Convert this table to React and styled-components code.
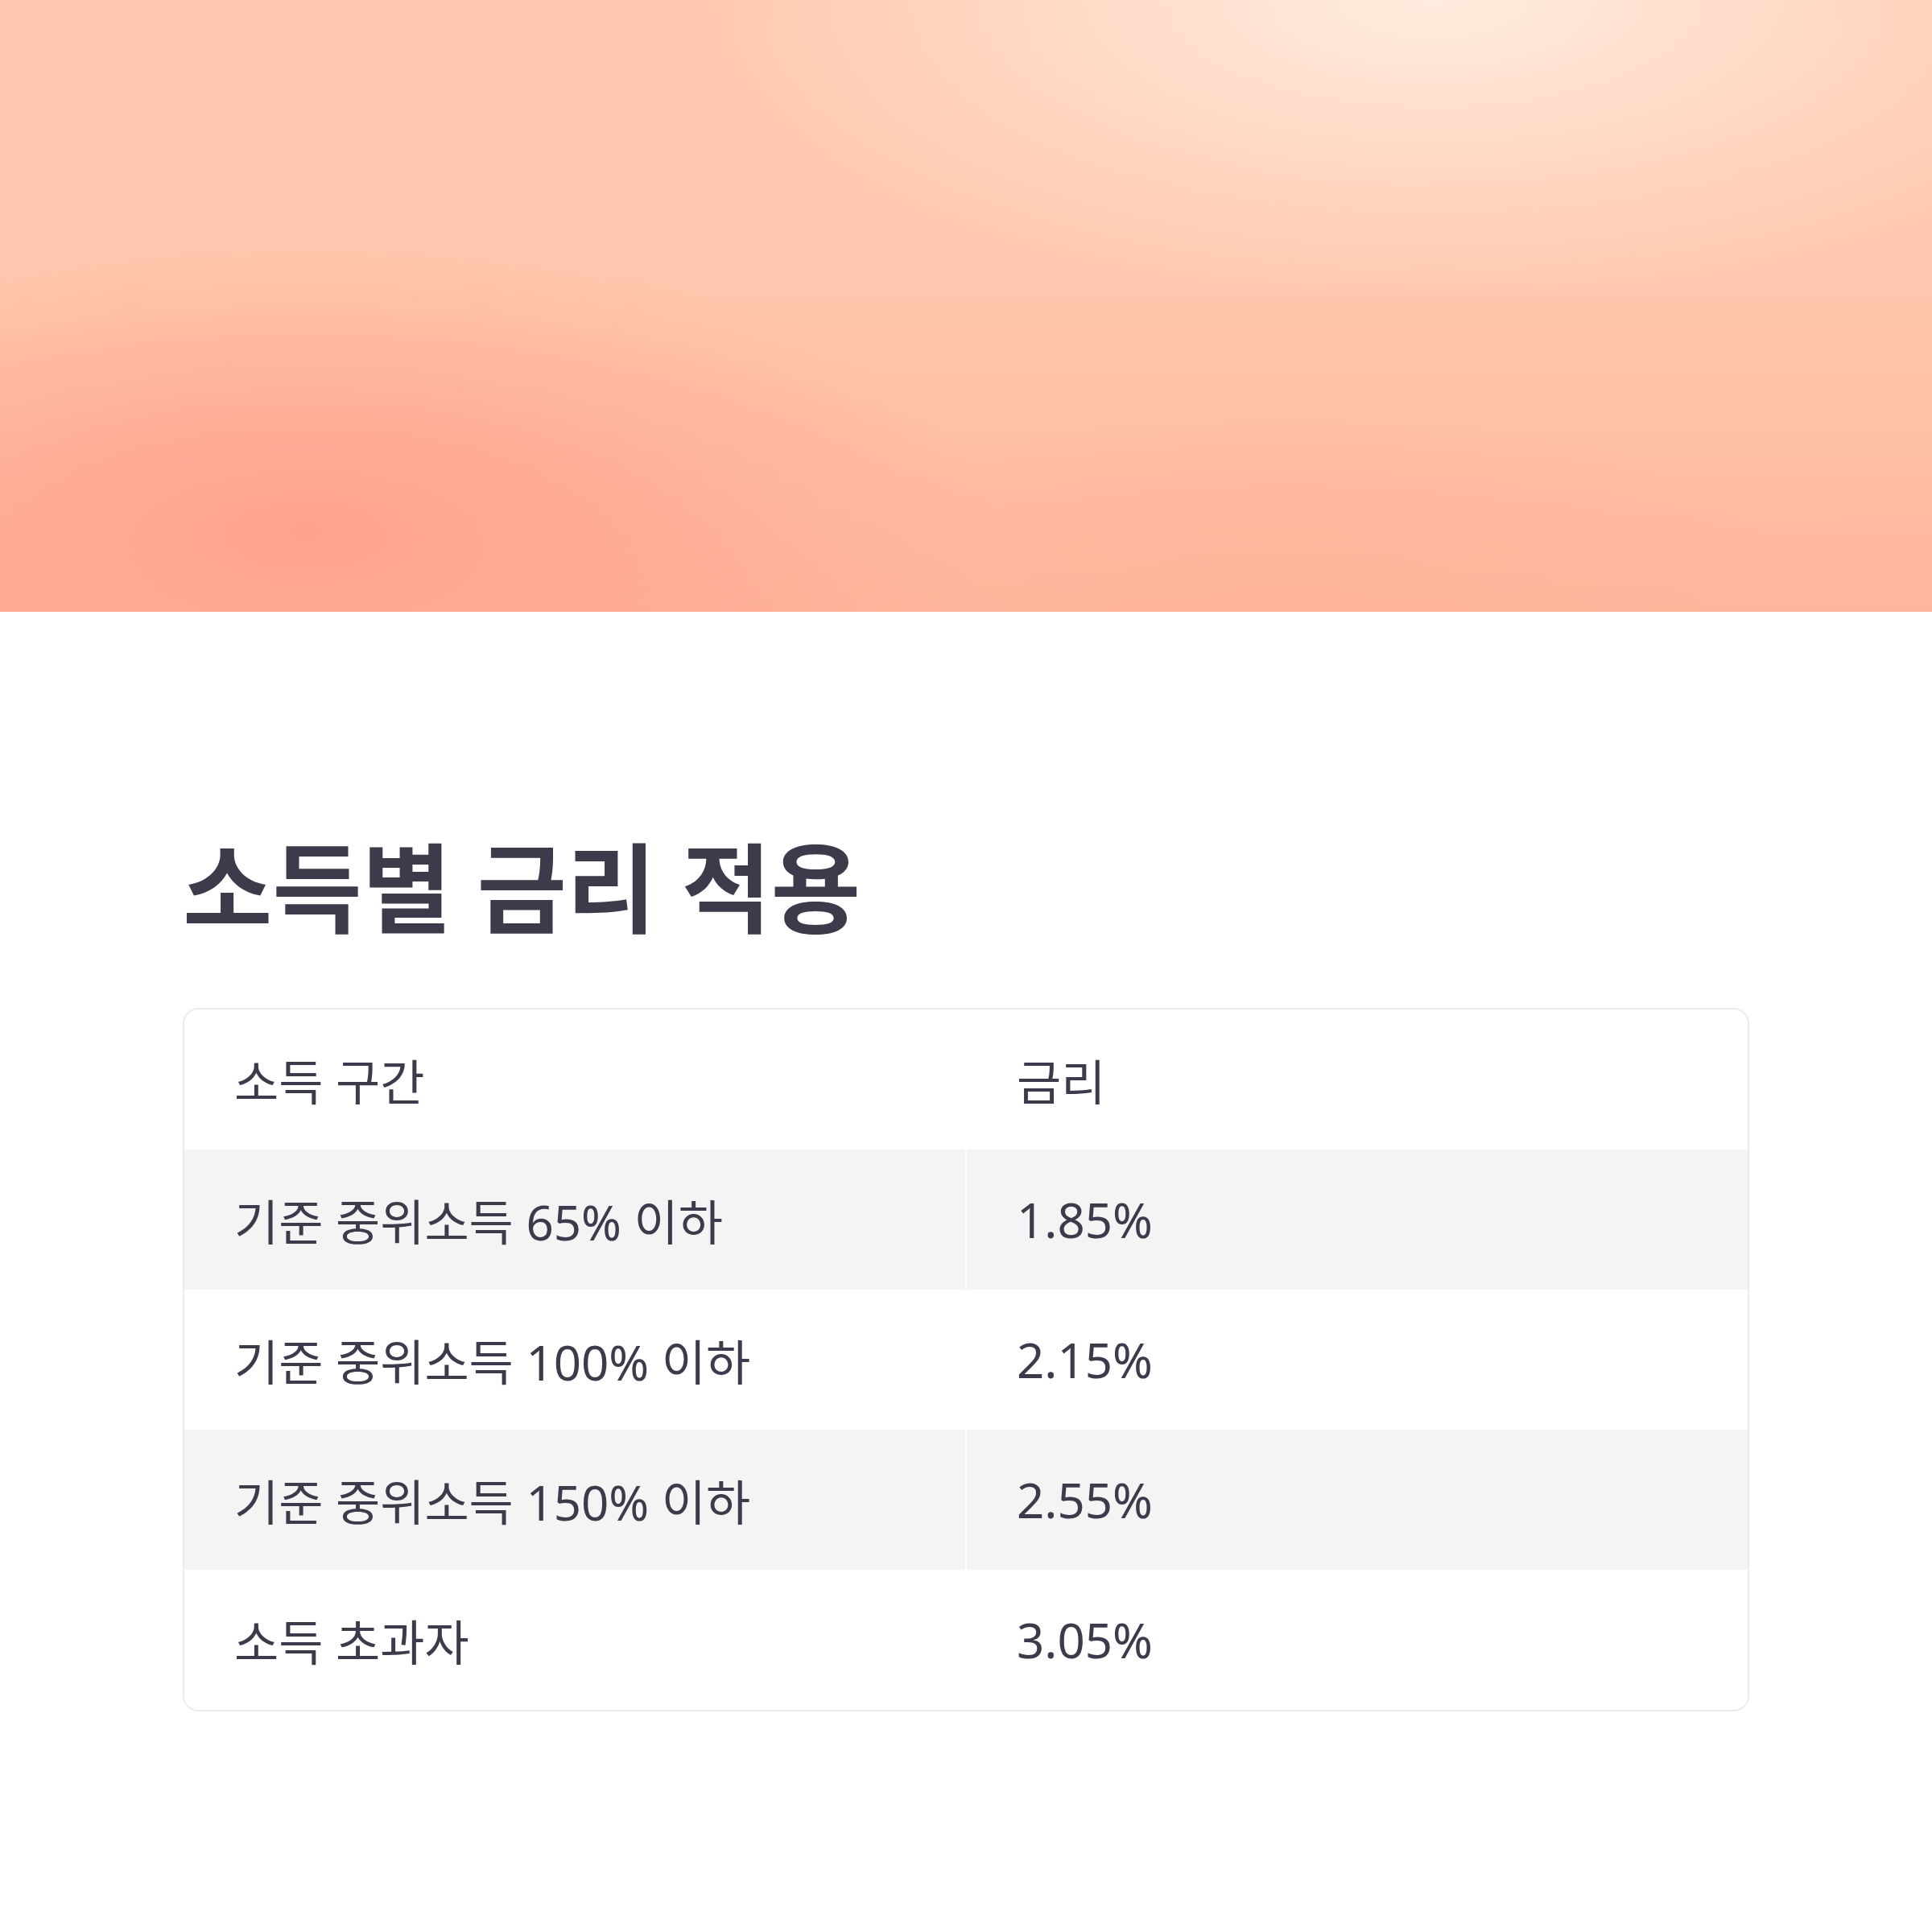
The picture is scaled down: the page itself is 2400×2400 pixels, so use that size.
import React from "react";
import styled, { createGlobalStyle } from "styled-components";

const GlobalStyle = createGlobalStyle`
  html, body { margin: 0; padding: 0; background: #ffffff; }
  body {
    font-family: "Noto Sans", "Noto Sans CJK KR", sans-serif;
    color: #3e3a4c;
  }
`;

const Page = styled.div`
  width: 2400px;
  min-height: 2400px;
  background: #ffffff;
`;

const Banner = styled.div`
  height: 760px;
  background:
    radial-gradient(ellipse 1150px 480px at 380px 660px, rgba(255, 160, 140, 0.95) 0%, rgba(255, 160, 140, 0) 75%),
    radial-gradient(ellipse 1300px 520px at 1780px 0px, rgba(255, 236, 222, 1) 0%, rgba(255, 236, 222, 0) 72%),
    radial-gradient(ellipse 900px 380px at 1600px 780px, rgba(255, 178, 152, 0.7) 0%, rgba(255, 178, 152, 0) 75%),
    linear-gradient(180deg, #ffc7ad 0%, #ffc8ae 45%, #ffb59d 100%);
`;

const Content = styled.section`
  padding: 0 227px;
  display: flex;
  flex-direction: column;
`;

const Title = styled.h1`
  margin: 262px 0 0 0;
  font-size: 121px;
  line-height: 160px;
  font-weight: 700;
  color: #3e3a4c;
  letter-spacing: 0;
`;

const Card = styled.div`
  margin-top: 70px;
  border: 2px solid #ebebeb;
  border-radius: 20px;
  overflow: hidden;
  display: flex;
  flex-direction: column;
  background: #ffffff;
`;

const Row = styled.div`
  display: grid;
  grid-template-columns: 1fr 1fr;
  column-gap: 2px;
  height: 174px;
  background: #ffffff;
`;

const Cell = styled.div`
  display: flex;
  align-items: center;
  padding: 0 62px;
  font-size: 60px;
  font-weight: 400;
  color: #3e3a4c;
  background: ${(p) => (p.$striped ? "#f4f4f4" : "#ffffff")};
  white-space: nowrap;
`;

const rows = [
  ["기준 중위소득 65% 이하", "1.85%"],
  ["기준 중위소득 100% 이하", "2.15%"],
  ["기준 중위소득 150% 이하", "2.55%"],
  ["소득 초과자", "3.05%"],
];

export default function App() {
  return (
    <Page>
      <GlobalStyle />
      <Banner />
      <Content>
        <Title>소득별 금리 적용</Title>
        <Card>
          <Row>
            <Cell>소득 구간</Cell>
            <Cell>금리</Cell>
          </Row>
          {rows.map(([a, b], i) => (
            <Row key={a}>
              <Cell $striped={i % 2 === 0}>{a}</Cell>
              <Cell $striped={i % 2 === 0}>{b}</Cell>
            </Row>
          ))}
        </Card>
      </Content>
    </Page>
  );
}
